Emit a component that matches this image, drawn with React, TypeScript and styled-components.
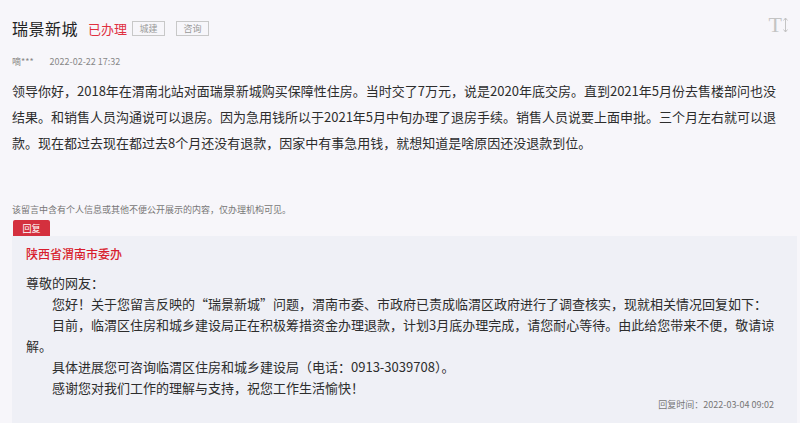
import React from "react";
import styled, { createGlobalStyle } from "styled-components";

const GlobalStyle = createGlobalStyle`
  html, body {
    margin: 0;
    padding: 0;
    background: #f7f6fa;
  }
  body {
    font-family: "Noto Sans CJK SC", "Noto Sans", sans-serif;
    color: #333;
  }
`;

const Page = styled.div`
  width: 800px;
  height: 423px;
  overflow: hidden;
  background: #f7f6fa;
  padding: 0 3px 0 12px;
  box-sizing: border-box;
`;

const Header = styled.div`
  display: flex;
  align-items: center;
  height: 30px;
  padding-top: 13px;
`;

const Title = styled.h1`
  margin: 0;
  font-size: 16px;
  font-weight: 400;
  color: #222;
  letter-spacing: 0.5px;
`;

const Status = styled.span`
  margin-left: 10px;
  font-size: 13px;
  color: #e0303f;
`;

const Tag = styled.span`
  margin-left: 5px;
  display: inline-flex;
  align-items: center;
  justify-content: center;
  width: 31px;
  height: 13px;
  border: 1px solid #c8c8c8;
  font-size: 9px;
  color: #999;
  & + & {
    margin-left: 11px;
  }
`;

const FontTool = styled.div`
  margin-left: auto;
  margin-right: 9px;
  margin-bottom: 7px;
  display: flex;
  align-items: center;
  gap: 1px;
  color: #c4c4c4;
  font-family: "Liberation Serif", serif;
  font-size: 22px;
  line-height: 1;
`;

const Meta = styled.div`
  display: flex;
  gap: 16px;
  margin-top: 12px;
  font-size: 9px;
  color: #888;
`;

const Body = styled.p`
  margin: 10px 0 0;
  font-size: 13px;
  line-height: 26px;
  color: #2d2d2d;
  white-space: nowrap;
`;

const Notice = styled.div`
  margin-top: 47px;
  font-size: 9px;
  color: #777;
`;

const ReplyTab = styled.div`
  margin-top: 4px;
  margin-left: 1px;
  width: 37px;
  height: 16px;
  display: flex;
  align-items: center;
  justify-content: center;
  background: #d4303e;
  border-radius: 2px 2px 0 0;
  color: #fff;
  font-size: 9px;
`;

const ReplyBox = styled.div`
  background: #eff0f6;
  padding: 10px 12px 30px 14px;
  min-height: 200px;
`;

const Office = styled.div`
  font-size: 12px;
  color: #d81e2e;
  font-weight: 500;
  line-height: 16px;
`;

const Greeting = styled.div`
  margin-top: 10px;
  font-size: 13px;
  line-height: 21px;
  color: #2d2d2d;
`;

const Para = styled.p`
  margin: 0;
  font-size: 13px;
  line-height: 21px;
  text-indent: 2em;
  white-space: nowrap;
  color: #2d2d2d;
`;

const ReplyTime = styled.div`
  margin-right: 11px;
  text-align: right;
  font-size: 9px;
  color: #777;
`;

const ArrowIcon = () => (
  <svg width="5" height="16" viewBox="0 0 5 16" fill="none">
    <path d="M2.5 1 V15" stroke="#c4c4c4" strokeWidth="1" />
    <path d="M0.5 3.5 L2.5 1 L4.5 3.5 M0.5 12.5 L2.5 15 L4.5 12.5" stroke="#c4c4c4" strokeWidth="1" />
  </svg>
);

export default function App() {
  return (
    <Page>
      <GlobalStyle />
      <Header>
        <Title>瑞景新城</Title>
        <Status>已办理</Status>
        <Tag>城建</Tag>
        <Tag>咨询</Tag>
        <FontTool>
          T
          <ArrowIcon />
        </FontTool>
      </Header>
      <Meta>
        <span>嘀***</span>
        <span>2022-02-22 17:32</span>
      </Meta>
      <Body>
        领导你好，2018年在渭南北站对面瑞景新城购买保障性住房。当时交了7万元，说是2020年底交房。直到2021年5月份去售楼部问也没
        <br />
        结果。和销售人员沟通说可以退房。因为急用钱所以于2021年5月中旬办理了退房手续。销售人员说要上面申批。三个月左右就可以退
        <br />
        款。现在都过去现在都过去8个月还没有退款，因家中有事急用钱，就想知道是啥原因还没退款到位。
      </Body>
      <Notice>该留言中含有个人信息或其他不便公开展示的内容，仅办理机构可见。</Notice>
      <ReplyTab>回复</ReplyTab>
      <ReplyBox>
        <Office>陕西省渭南市委办</Office>
        <Greeting>尊敬的网友：</Greeting>
        <Para>
          您好！关于您留言反映的“瑞景新城”问题，渭南市委、市政府已责成临渭区政府进行了调查核实，现就相关情况回复如下：
        </Para>
        <Para>
          目前，临渭区住房和城乡建设局正在积极筹措资金办理退款，计划3月底办理完成，请您耐心等待。由此给您带来不便，敬请谅
          <br />
          解。
        </Para>
        <Para>具体进展您可咨询临渭区住房和城乡建设局（电话：0913-3039708）。</Para>
        <Para>感谢您对我们工作的理解与支持，祝您工作生活愉快！</Para>
        <ReplyTime>回复时间：2022-03-04 09:02</ReplyTime>
      </ReplyBox>
    </Page>
  );
}
